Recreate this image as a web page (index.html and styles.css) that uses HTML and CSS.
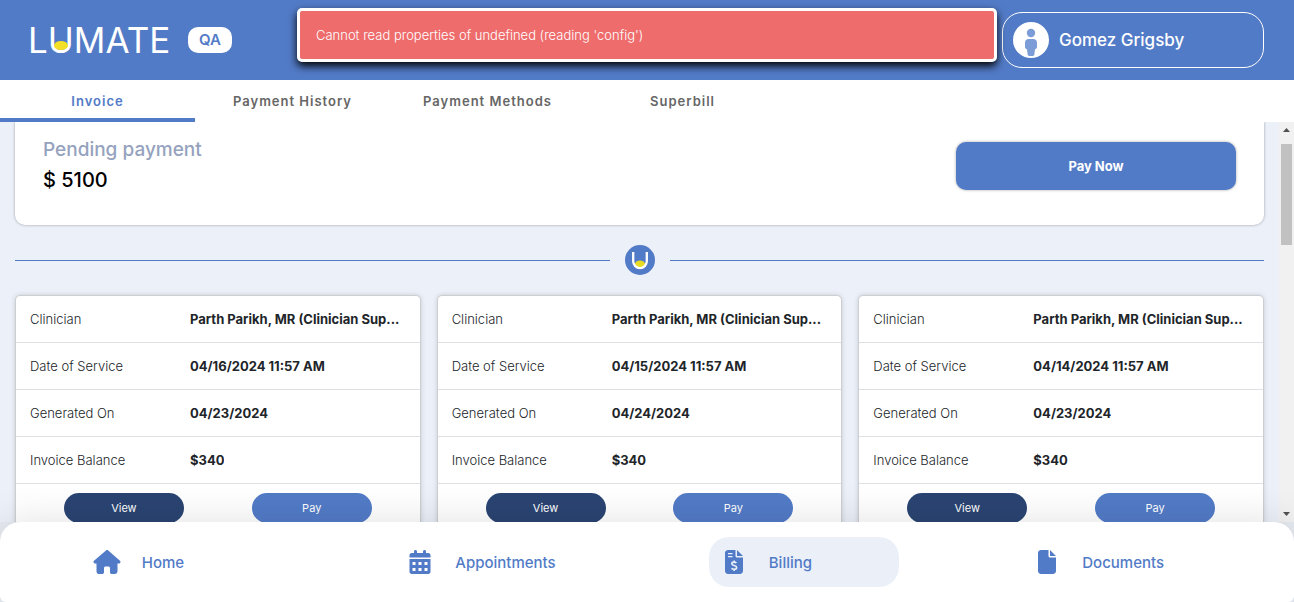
FILE: index.html
```html
<!DOCTYPE html>
<html lang="en">
<head>
<meta charset="utf-8">
<meta name="viewport" content="width=device-width, initial-scale=1">
<title>Lumate - Billing</title>
<link rel="stylesheet" href="styles.css">
</head>
<body>
<div class="app">
  <header class="header">
    <a class="brand" href="#home">
      <span class="brand-name">L<span class="brand-u">U<span class="brand-sun"></span></span>MATE</span>
      <span class="brand-env">QA</span>
    </a>
    <button class="user" type="button">
      <svg class="avatar" viewBox="0 0 36 36" aria-hidden="true">
        <circle cx="18" cy="18" r="18" fill="#fff"/>
        <circle cx="18" cy="11" r="4.2" fill="#7b9cd6"/>
        <path d="M16 17h4c2.600 0 4 1.600 4 4v4c0 1.200-.8 2-2 2.300l-.6 5c-.1 1-.7 1.700-1.700 1.700h-3.400c-1 0-1.600-.7-1.700-1.700l-.6-5c-1.200-.3-2-1.100-2-2.300v-4c0-2.400 1.400-4 4-4z" fill="#7b9cd6"/>
      </svg>
      <span>Gomez Grigsby</span>
    </button>
  </header>
  <div class="tabs" role="tablist">
    <button class="tab tab-active" type="button" role="tab" aria-selected="true">Invoice</button>
    <button class="tab" type="button" role="tab" aria-selected="false">Payment History</button>
    <button class="tab" type="button" role="tab" aria-selected="false">Payment Methods</button>
    <button class="tab" type="button" role="tab" aria-selected="false">Superbill</button>
  </div>
  <div class="viewport">
    <main class="content">
      <section class="pending">
        <div>
          <h2 class="pending-label">Pending payment</h2>
          <p class="pending-amount">$ 5100</p>
        </div>
        <button class="pay-now" type="button">Pay Now</button>
      </section>
      <div class="divider">
        <svg class="mark" viewBox="0 0 30 30" aria-hidden="true">
          <circle cx="15" cy="15" r="15" fill="#527bc7"/>
          <ellipse cx="15" cy="19" rx="5" ry="3.500" fill="#e8dc22"/>
          <path d="M8.200 7v9.300a6.800 6.800 0 0 0 13.600 0V7" fill="none" stroke="#fff" stroke-width="2.300"/>
        </svg>
      </div>
      <section class="cards">
        <article class="card">
          <dl class="facts">
            <div class="fact"><dt>Clinician</dt><dd>Parth Parikh, MR (Clinician Sup...</dd></div>
            <div class="fact"><dt>Date of Service</dt><dd>04/16/2024 11:57 AM</dd></div>
            <div class="fact"><dt>Generated On</dt><dd>04/23/2024</dd></div>
            <div class="fact"><dt>Invoice Balance</dt><dd>$340</dd></div>
          </dl>
          <div class="actions"><button class="pill pill-dark" type="button">View</button><button class="pill" type="button">Pay</button></div>
        </article>
        <article class="card">
          <dl class="facts">
            <div class="fact"><dt>Clinician</dt><dd>Parth Parikh, MR (Clinician Sup...</dd></div>
            <div class="fact"><dt>Date of Service</dt><dd>04/15/2024 11:57 AM</dd></div>
            <div class="fact"><dt>Generated On</dt><dd>04/24/2024</dd></div>
            <div class="fact"><dt>Invoice Balance</dt><dd>$340</dd></div>
          </dl>
          <div class="actions"><button class="pill pill-dark" type="button">View</button><button class="pill" type="button">Pay</button></div>
        </article>
        <article class="card">
          <dl class="facts">
            <div class="fact"><dt>Clinician</dt><dd>Parth Parikh, MR (Clinician Sup...</dd></div>
            <div class="fact"><dt>Date of Service</dt><dd>04/14/2024 11:57 AM</dd></div>
            <div class="fact"><dt>Generated On</dt><dd>04/23/2024</dd></div>
            <div class="fact"><dt>Invoice Balance</dt><dd>$340</dd></div>
          </dl>
          <div class="actions"><button class="pill pill-dark" type="button">View</button><button class="pill" type="button">Pay</button></div>
        </article>
      </section>
    </main>
    <div class="scrollbar" aria-hidden="true">
      <svg class="arrow" viewBox="0 0 15 17"><path d="M4 10h7L7.500 6z" fill="#505050"/></svg>
      <div class="track"><div class="thumb"></div></div>
      <svg class="arrow" viewBox="0 0 15 17"><path d="M4 7h7l-3.500 4z" fill="#505050"/></svg>
    </div>
  </div>
  <nav class="nav" aria-label="Main">
    <a class="nav-item" href="#home">
      <svg class="nav-icon" viewBox="0 0 576 512" aria-hidden="true"><path d="M575.800 255.500c0 18-15 32.100-32 32.100h-32l.7 160.200c0 36-27 64.200-56.500 64.200H392c-22 0-40-18-40-40v-88c0-17.700-14.300-32-32-32h-64c-17.700 0-32 14.300-32 32v88c0 22-18 40-40 40h-64c-31 0-56-25-56-56V287.600H32c-18 0-32-14-32-32.100 0-9 3-17 10-24L266.400 8c7-7 15-8 22-8s15 2 21 7l255.400 224.500c8 7 12 15 11 24z"/></svg>
      <span>Home</span>
    </a>
    <a class="nav-item" href="#appointments">
      <svg class="nav-icon" viewBox="0 0 448 512" aria-hidden="true"><path fill-rule="evenodd" d="M128 0c17.700 0 32 14.300 32 32v32h128V32c0-17.700 14.300-32 32-32s32 14.300 32 32v32h48c26.500 0 48 21.500 48 48v48H0v-48c0-26.500 21.500-48 48-48h48V32c0-17.700 14.300-32 32-32zM0 192h448v272c0 26.500-21.500 48-48 48H48c-26.500 0-48-21.500-48-48V192zm64 64v64h64v-64zm128 0v64h64v-64zm128 0v64h64v-64zM64 384v64h64v-64zm128 0v64h64v-64zm128 0v64h64v-64z"/></svg>
      <span>Appointments</span>
    </a>
    <a class="nav-item nav-active" href="#billing" aria-current="page">
      <svg class="nav-icon" viewBox="0 0 384 512" aria-hidden="true"><path fill-rule="evenodd" d="M64 0h160v128c0 17.700 14.300 32 32 32h128v288c0 35.300-28.700 64-64 64H64c-35.300 0-64-28.700-64-64V64C0 28.700 28.700 0 64 0zm192 0 128 128H256zM64 64v28h96V64zm0 64v28h96v-28z"/><path class="nav-cutout" d="M244 276c-12-12-29-17-50-17-29 0-49 14-49 35 0 52 103 22 103 78 0 24-21 40-52 40-24 0-43-7-57-20M194 225v34m0 153v34"/></svg>
      <span>Billing</span>
    </a>
    <a class="nav-item" href="#documents">
      <svg class="nav-icon" viewBox="0 0 384 512" aria-hidden="true"><path d="M0 64C0 28.700 28.700 0 64 0h160v128c0 17.700 14.300 32 32 32h128v288c0 35.300-28.700 64-64 64H64c-35.300 0-64-28.700-64-64zM384 128H256V0z"/></svg>
      <span>Documents</span>
    </a>
  </nav>
  <div class="toast" role="alert">Cannot read properties of undefined (reading 'config')</div>
</div>
</body>
</html>
```
FILE: styles.css
```css
* {
  box-sizing: border-box;
}

body {
  margin: 0;
  font-family: Inter, "Liberation Sans", sans-serif;
  color: #212529;
}

button {
  font-family: inherit;
  cursor: pointer;
}

.app {
  display: flex;
  flex-direction: column;
  height: 100vh;
  overflow: hidden;
  background: #e6eaf1;
}

.header {
  display: flex;
  flex: none;
  align-items: center;
  justify-content: space-between;
  height: 80px;
  padding: 0 30px 0 28px;
  background: #527bc7;
}

.brand {
  display: flex;
  align-items: center;
  gap: 8px;
  color: #fff;
  text-decoration: none;
}

.brand-name {
  min-width: 152px;
  font-size: 35px;
  font-weight: 400;
  line-height: 40px;
}

.brand-u {
  position: relative;
}

.brand-sun {
  position: absolute;
  bottom: 11px;
  left: 50%;
  width: 14px;
  height: 9px;
  margin-left: -7px;
  border-radius: 50%;
  background: #f3e026;
}

.brand-env {
  width: 44px;
  border-radius: 10px;
  background: #fff;
  color: #527bc7;
  font-size: 15px;
  font-weight: 600;
  line-height: 26px;
  text-align: center;
}

.user {
  display: flex;
  align-items: center;
  gap: 10px;
  width: 262px;
  height: 56px;
  padding: 0 10px;
  border: 1px solid #fff;
  border-radius: 20px;
  background: none;
  color: #fff;
  font-size: 17px;
  font-weight: 500;
}

.avatar {
  width: 36px;
  height: 36px;
}

.toast {
  position: absolute;
  top: 8px;
  left: 50%;
  width: 700px;
  max-width: 100%;
  padding: 14px 16px;
  border: 3px solid #fff;
  border-radius: 5px;
  background: #ee6c6c;
  box-shadow: 0 4px 8px #000;
  color: #fff;
  font-size: 13px;
  font-weight: 300;
  line-height: 20px;
  transform: translateX(-50%);
}

.tabs {
  display: flex;
  flex: none;
  background: #fff;
}

.tab {
  width: 195px;
  height: 42px;
  padding: 4px 0 0;
  border: 0;
  border-bottom: 4px solid transparent;
  background: none;
  color: #666;
  font-size: 13px;
  font-weight: 600;
  letter-spacing: 1px;
}

.tab-active {
  border-bottom-color: #527bc7;
  color: #527bc7;
}

.viewport {
  display: flex;
  flex: 1;
  min-height: 0;
  overflow: hidden;
  background: #ebf0f9;
}

.content {
  flex: 1;
  min-width: 0;
  padding: 0 15px;
}

.pending {
  display: flex;
  justify-content: space-between;
  padding: 14px 28px 28px;
  border-radius: 0 0 10px 10px;
  background: #fff;
  box-shadow: 0 0 3px rgba(0, 0, 0, 0.35);
}

.pending-label {
  margin: 0;
  color: #95a2be;
  font-size: 19px;
  font-weight: 500;
  line-height: 28px;
}

.pending-amount {
  margin: 0;
  color: #000;
  font-size: 20px;
  font-weight: 500;
  line-height: 33px;
}

.pay-now {
  width: 280px;
  height: 48px;
  margin-top: 6px;
  border: 0;
  border-radius: 10px;
  background: #527bc7;
  box-shadow: 0 0 3px rgba(0, 0, 0, 0.35);
  color: #fff;
  font-size: 13px;
  font-weight: 700;
}

.divider {
  display: flex;
  align-items: center;
  gap: 15px;
  height: 70px;
}

.divider::before,
.divider::after {
  flex: 1;
  height: 1px;
  background: #527bc7;
  content: "";
}

.mark {
  width: 30px;
  height: 30px;
}

.cards {
  display: grid;
  grid-template-columns: repeat(3, minmax(0, 1fr));
  gap: 16px;
}

.card {
  border: 1px solid #ccced2;
  border-radius: 5px;
  background: #fff;
  box-shadow: 0 0 5px rgba(0, 0, 0, 0.15);
}

.facts {
  margin: 0;
}

.fact {
  display: flex;
  padding: 13px 14px;
  border-bottom: 1px solid #dee0e4;
  font-size: 13px;
  line-height: 20px;
}

.fact dt {
  flex: none;
  width: 160px;
  font-weight: 300;
}

.fact dd {
  min-width: 0;
  margin: 0;
  overflow: hidden;
  font-weight: 700;
  text-overflow: ellipsis;
  white-space: nowrap;
}

.actions {
  display: flex;
  justify-content: space-around;
  padding: 9px 14px;
}

.pill {
  width: 120px;
  height: 30px;
  border: 0;
  border-radius: 15px;
  background: #527bc7;
  color: #fff;
  font-size: 11px;
  font-weight: 400;
}

.pill-dark {
  background: #2a4472;
}

.scrollbar {
  display: flex;
  flex: none;
  flex-direction: column;
  width: 15px;
  background: #f1f1f1;
}

.arrow {
  flex: none;
  width: 15px;
  height: 17px;
}

.track {
  flex: 1;
  padding: 5px 2px;
}

.thumb {
  height: 101px;
  background: #c1c1c1;
}

.nav {
  position: relative;
  display: grid;
  flex: none;
  grid-template-columns: repeat(4, 1fr);
  align-items: center;
  justify-items: center;
  height: 80px;
  padding: 0 20px;
  border-radius: 20px 20px 6px 6px;
  background: #fff;
  box-shadow: 0 0 40px rgba(0, 0, 0, 0.12);
}

.nav-item {
  display: flex;
  align-items: center;
  gap: 10px;
  width: 190px;
  height: 50px;
  border-radius: 20px;
  color: #527bc7;
  font-size: 15px;
  font-weight: 500;
  text-decoration: none;
}

.nav-active {
  background: #ebf0f8;
}

.nav-icon {
  width: 50px;
  height: 24px;
  fill: #527bc7;
}

.nav-cutout {
  fill: none;
  stroke: #ebf0f8;
  stroke-width: 34;
}
```
